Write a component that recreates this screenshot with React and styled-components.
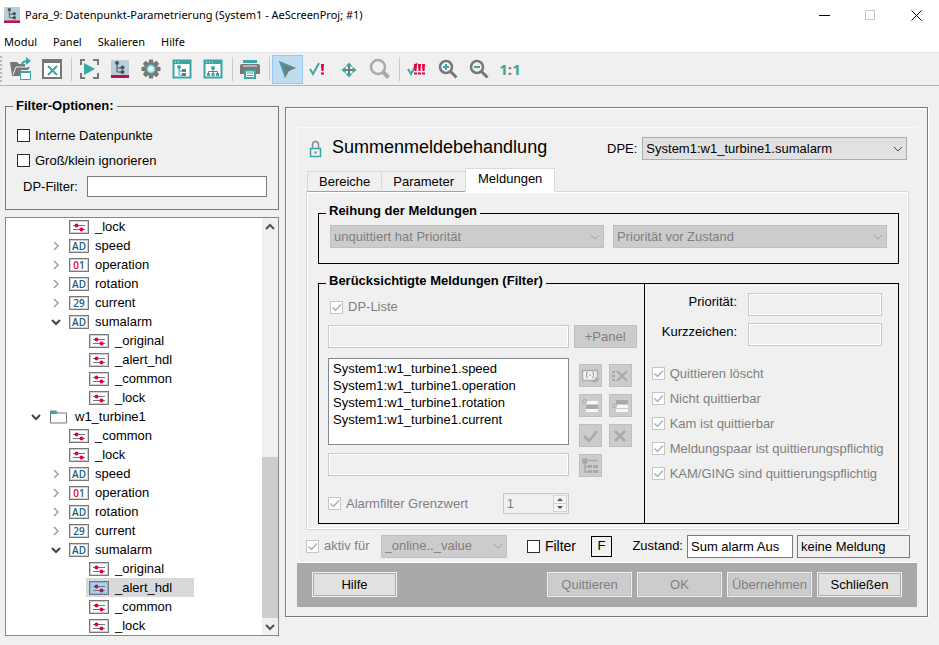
import React, { useState } from 'react'
import styled, { createGlobalStyle, css } from 'styled-components'

const teal = '#3aa6a6'
const grey = '#777777'
const red = '#e4003a'

const GlobalStyle = createGlobalStyle`
  * {
    box-sizing: border-box;
  }

  body {
    margin: 0;
    background: #f0f0f0;
    color: #000;
    font: 13px/16px "Liberation Sans", Arial, sans-serif;
  }

  button, input, select {
    margin: 0;
    font: inherit;
    color: inherit;
  }
`

const Window = styled.div`
  display: flex;
  flex-direction: column;
  min-height: 100vh;
`

/* title and menu */

const TitleBar = styled.header`
  display: flex;
  align-items: center;
  gap: 5px;
  height: 30px;
  padding-left: 4px;
  background: #fff;
`

const Title = styled.h1`
  flex: 1;
  margin: 0;
  font: 400 11px/16px "Noto Sans", "Open Sans", sans-serif;
  white-space: nowrap;
`

const WindowButtons = styled.div`
  display: flex;
`

const WindowButton = styled.button`
  display: flex;
  align-items: center;
  justify-content: center;
  width: 46px;
  height: 29px;
  padding: 0;
  border: 0;
  background: none;
  color: ${({ disabled }) => (disabled ? '#c4c4c4' : '#000')};
`

const MenuBar = styled.nav`
  display: flex;
  align-items: center;
  gap: 16px;
  height: 22px;
  padding: 2px 4px 0;
  background: #fff;
`

const MenuItem = styled.button`
  padding: 0;
  border: 0;
  background: none;
  font: 11px/16px "Noto Sans", "Open Sans", sans-serif;
`

/* toolbar */

const Toolbar = styled.div`
  display: flex;
  align-items: center;
  height: 34px;
  border-top: 1px solid #e4e4e4;
  border-bottom: 1px solid #b4b4b4;
  background: #f0f0f0;
`

const Grip = styled.div`
  width: 6px;
  height: 26px;
  border-left: 2px dotted #b8b8b8;
`

const ToolButton = styled.button`
  display: flex;
  align-items: center;
  justify-content: center;
  width: 31px;
  height: 29px;
  padding: 0 1px 0 0;
  border: 1px solid ${({ $active }) => ($active ? '#90c8f6' : 'transparent')};
  background: ${({ $active }) => ($active ? '#bfdcf3' : 'none')};
`

const ToolSeparator = styled.div`
  width: 6px;
  height: 24px;
  background: linear-gradient(#c9c9c9, #c9c9c9) center / 1px 100% no-repeat;
`

const ScaleText = styled.span`
  color: ${teal};
  font: 700 15px/20px "Open Sans", sans-serif;

  i {
    color: ${grey};
    font-style: normal;
  }
`

/* page */

const Main = styled.main`
  flex: 1;
  display: flex;
  align-items: stretch;
  gap: 6px;
  padding: 12px 11px 9px 5px;
`

const Sidebar = styled.aside`
  display: flex;
  flex-direction: column;
  gap: 7px;
  width: 274px;
  flex-shrink: 0;
`

const Group = styled.fieldset`
  min-width: 0;
  margin: 0;
  border: 1px solid ${({ $dark }) => ($dark ? '#000' : '#7a7a7a')};
  padding: ${({ $padding }) => $padding};
`

const Legend = styled.legend`
  margin-left: ${({ $indent = -4 }) => $indent}px;
  padding: 0 3px ${({ $raised }) => ($raised ? '5px' : '0')};
  font-weight: 700;
`

const Check = styled.label`
  display: flex;
  align-items: center;
  gap: 5px;
  height: ${({ $height }) => $height || 25}px;
  font-size: ${({ $large }) => ($large ? 14 : 13)}px;
  color: ${({ $disabled }) => ($disabled ? '#7f7f7f' : '#000')};
  white-space: nowrap;
`

const CheckMark = styled.span`
  display: grid;
  width: 13px;
  height: 13px;

  > * {
    grid-area: 1 / 1;
  }

  svg {
    pointer-events: none;
  }
`

const CheckInput = styled.input`
  appearance: none;
  width: 13px;
  height: 13px;
  border: 1px solid #2b2b2b;
  background: #fff;

  &:disabled {
    border-color: #c6c6c6;
  }
`

const FilterRow = styled.div`
  display: flex;
  align-items: center;
  gap: 9px;
  padding: 3px 0 0 6px;

  label {
    flex-shrink: 0;
  }
`

const TextInput = styled.input`
  flex-shrink: ${({ $width }) => ($width ? 0 : 1)};
  min-width: 0;
  width: ${({ $width }) => ($width ? `${$width}px` : '100%')};
  height: ${({ $height }) => $height || 23}px;
  padding: 0 3px;
  border: 1px solid #7a7a7a;
  background: ${({ $plain }) => ($plain ? '#f0f0f0' : '#fff')};

  &:disabled {
    border-color: #c8c8c8;
    background: #f0f0f0;
    box-shadow: inset 0 0 0 1px #fff;
  }
`

/* datapoint tree */

const TreeBox = styled.div`
  flex: 1;
  display: flex;
  border: 1px solid #828790;
  background: #fff;
`

const TreeList = styled.ul`
  flex: 1;
  margin: -1px 0 0;
  padding: 0;
  list-style: none;
`

const TreeRow = styled.li`
  display: flex;
  align-items: center;
  height: 19px;
  padding-left: ${({ $level }) => $level * 20}px;
`

const TreeArrow = styled.span`
  display: flex;
  justify-content: center;
  width: 20px;
`

const TreeItem = styled.span`
  display: flex;
  align-items: center;
  gap: 6px;
  height: 19px;
  padding: 0 22px 0 3px;
  background: ${({ $selected }) => ($selected ? '#d9d9d9' : 'none')};
`

const TypeBadge = styled.span`
  display: flex;
  align-items: center;
  justify-content: center;
  width: 20px;
  height: 14px;
  border: 1px solid #777;
  background: ${({ $selected }) => ($selected ? '#a9d0f5' : '#fff')};
  box-shadow: inset 0 0 0 1px ${({ $selected }) => ($selected ? '#8fb4d6' : '#d0d0d0')};
  color: #1b5f80;
  font: 600 10px/12px "Open Sans", sans-serif;

  b {
    color: ${red};
    font-weight: 600;
  }
`

const FolderCell = styled.span`
  display: flex;
  width: 20px;
`

const ScrollBar = styled.div`
  display: flex;
  flex-direction: column;
  width: 16px;
  background: #f0f0f0;
`

const ScrollButton = styled.button`
  display: flex;
  align-items: center;
  justify-content: center;
  height: 17px;
  padding: 0;
  border: 0;
  background: none;
`

const ScrollTrack = styled.div`
  flex: 1;
  display: flex;
  flex-direction: column;
  justify-content: flex-end;
`

const ScrollThumb = styled.div`
  height: 42%;
  background: #cdcdcd;
`

/* parameter panel */

const Panel = styled.section`
  flex: 1;
  align-self: flex-start;
  min-width: 0;
  margin-top: 9px;
  padding: 19px 10px 9px 11px;
  border: 1px solid #7a7a7a;
  box-shadow: 1px 1px #fff, inset 1px 1px #fff;
`

const PanelBody = styled.div`
  padding-top: 1px;
  box-shadow: inset 1px 1px #fafafa;
`

const PanelHead = styled.div`
  display: flex;
  align-items: center;
  gap: 10px;
  padding: 9px 10px 9px 12px;
`

const PanelTitle = styled.h2`
  flex: 1;
  margin: 0;
  padding-bottom: 3px;
  font-size: 18px;
  line-height: 20px;
  font-weight: 400;
`

const DpeField = styled.label`
  display: flex;
  align-items: center;
  gap: 5px;
  flex: 0 1 300px;
`

const SelectBox = styled.span`
  display: grid;
  align-items: center;
  flex: ${({ $width }) => ($width ? `0 0 ${$width}px` : '1')};
  min-width: 0;

  > * {
    grid-area: 1 / 1;
  }

  svg {
    justify-self: end;
    margin-right: 4px;
    pointer-events: none;
    color: ${({ $disabled }) => ($disabled ? '#a0a0a0' : '#444')};
  }
`

const SelectInput = styled.select`
  appearance: none;
  width: 100%;
  height: 23px;
  padding: 0 20px 0 3px;
  border: 1px solid #adadad;
  border-radius: 0;
  background: #e1e1e1;

  &:disabled {
    border-color: #bfbfbf;
    background: #cccccc;
    color: #7f7f7f;
    opacity: 1;
  }
`

const Tabs = styled.div`
  display: flex;
  align-items: flex-end;
  height: 22px;
  padding-left: 10px;
`

const Tab = styled.button`
  height: 21px;
  margin-bottom: -1px;
  padding: 0 11px;
  border: 1px solid #d9d9d9;
  border-right-width: 0;
  border-bottom-color: #a0a0a0;
  background: #f0f0f0;

  ${({ $selected }) =>
    $selected &&
    css`
      height: 24px;
      padding: 0 12px 2px;
      border-right-width: 1px;
      border-bottom-color: #fff;
      background: #fff;
    `}
`

const TabPane = styled.div`
  display: flex;
  flex-direction: column;
  gap: 9px;
  margin: 0 8px 0 9px;
  padding: 11px 9px 5px 11px;
  border: 1px solid #d9d9d9;
  box-shadow: inset 0 0 0 1px #fff;
`

const OrderRow = styled.div`
  display: flex;
  gap: 9px;
`

// pulled up to the border line so the divider meets it
const FilterColumns = styled.div`
  display: grid;
  grid-template-columns: minmax(0, 9fr) minmax(0, 7fr);
  margin-top: -10px;
`

const ListColumn = styled.div`
  padding: 14px 7px 9px 9px;
  border-right: 1px solid #000;
`

const OptionColumn = styled.div`
  display: flex;
  flex-direction: column;
  gap: 7px;
  padding: 9px 16px 0 7px;
`

const OptionChecks = styled.div`
  padding-top: 8px;
`

const OptionField = styled.label`
  display: flex;
  justify-content: flex-end;
  gap: 11px;
  line-height: 18px;
`

const ListHead = styled.div`
  padding: 0 2px 9px;
`

const ListGrid = styled.div`
  display: grid;
  grid-template-columns: 1fr 63px;
  gap: 10px 5px;
`

const ListStack = styled.div`
  display: flex;
  flex-direction: column;
  gap: 8px;
`

const DpList = styled.ul`
  height: 87px;
  margin: 0;
  padding: 1px 4px;
  border: 1px solid #828790;
  background: #fff;
  list-style: none;
  line-height: 17px;
`

const IconGrid = styled.div`
  display: grid;
  grid-template-columns: 23px 23px;
  grid-auto-rows: 23px;
  gap: 7px;
  padding: 6px 5px 0;
`

const FlatButton = styled.button`
  display: flex;
  align-items: center;
  justify-content: center;
  height: 23px;
  padding: 0;
  border: 1px solid #bfbfbf;
  background: #cccccc;
  color: #7f7f7f;
`

const LimitRow = styled.div`
  display: flex;
  align-items: center;
  justify-content: space-between;
  padding: 16px 68px 0 0;
`

const Spin = styled.span`
  display: flex;
  align-items: center;
  width: 66px;
  height: 21px;
  padding-right: 1px;
  border: 1px solid #c8c8c8;
`

const SpinInput = styled.input`
  flex: 1;
  min-width: 0;
  padding: 0 3px;
  border: 0;
  background: none;
  color: #7f7f7f;
`

const SpinArrows = styled.span`
  display: flex;
  width: 14px;
  height: 17px;
  border: 1px solid #d4d4d4;
  background: #f4f4f4;
`

const StateRow = styled.div`
  display: flex;
  align-items: center;
  justify-content: space-between;
  height: 32px;
  padding: 0 7px 0 9px;
`

const StateGroup = styled.div`
  display: flex;
  align-items: center;
  gap: ${({ $gap }) => $gap}px;
`

const FilterButton = styled.button`
  width: 21px;
  height: 21px;
  padding: 0;
  border: 1px solid #000;
  background: #f0f0f0;
`

const ButtonBar = styled.footer`
  display: flex;
  gap: 5px;
  padding: 9px 15px 10px;
  border-top: 1px solid #fff;
  background: #a9a9a9;
`

const BarButton = styled.button`
  width: 85px;
  height: 25px;
  margin-right: ${({ $first }) => ($first ? 'auto' : '0')};
  padding: 0;
  border: 1px solid #f0f0f0;
  background: #e1e1e1;
  box-shadow: inset 0 0 0 1px #adadad;

  &:disabled {
    background: #cccccc;
    box-shadow: inset 0 0 0 1px #bfbfbf;
    color: #7f7f7f;
  }
`

/* icons */

const Svg = ({ size = 24, children, ...rest }) => (
  <svg width={size} height={size} viewBox={`0 0 ${size} ${size}`} fill='none' aria-hidden='true' {...rest}>
    {children}
  </svg>
)

const Chevron = () => (
  <svg width='10' height='6' viewBox='0 0 10 6' fill='none' aria-hidden='true'>
    <path d='M1 1l4 4 4-4' stroke='currentColor' />
  </svg>
)

const ModuleIcon = ({ size = 16 }) => (
  <svg width={size} height={size} viewBox='0 0 18 18' aria-hidden='true'>
    <path fill='#b9ced9' d='M0 0h18v15H0z' />
    <path fill='#b01657' d='M0 15h18v3H0z' />
    <circle cx='6' cy='3' r='2' fill='#4b545c' />
    <path d='M6 5v7h5M6 8h5' stroke='#4b545c' fill='none' />
    <circle cx='11.5' cy='7.5' r='2' fill='#4b545c' />
    <circle cx='11.5' cy='12' r='2' fill='#4b545c' />
  </svg>
)

const OpenIcon = () => (
  <Svg>
    <path d='M1 5h7l2 2h6v3h5l-2 3h-7v6H3z' fill={grey} />
    <path d='M4 18l3-8h12' stroke='#f0f0f0' />
    <path d='M13 8c0-3 2-4 6-4' stroke={teal} strokeWidth='2' />
    <path d='M17 0l5 4-5 4z' fill={teal} />
    <path d='M11.500 14.500h10v8h-10z' fill='#fff' stroke={teal} />
    <path d='M11 14h11v2H11z' fill={teal} />
  </Svg>
)

const CloseBoxIcon = () => (
  <Svg>
    <path d='M3 3h18v18H3z' fill='#fff' stroke={grey} strokeWidth='2' />
    <path d='M2 2h20v4H2z' fill={grey} />
    <path d='M8 9l9 9M17 9l-9 9' stroke={teal} strokeWidth='2' />
  </Svg>
)

const PlayIcon = () => (
  <Svg>
    <path d='M8 3H4v5M16 3h5v5M4 16v5h4M21 16v5h-5' stroke={grey} strokeWidth='2' />
    <path d='M7 6l11 6-11 6z' fill={teal} />
  </Svg>
)

const GearIcon = () => (
  <Svg>
    {[0, 45, 90, 135].map((angle) => (
      <path key={angle} d='M10 2.500h4l.5 4v11l-.5 4h-4l-.5-4v-11z' fill={grey} transform={`rotate(${angle} 12 12)`} />
    ))}
    <circle cx='12' cy='12' r='6.500' fill={grey} />
    <circle cx='12' cy='12' r='3.500' fill='#f0f0f0' stroke='#a5dada' strokeWidth='2' />
    <circle cx='12' cy='12' r='4.500' stroke={teal} />
  </Svg>
)

const TreeWindowIcon = () => (
  <Svg>
    <path d='M3.500 3.500h17v17h-17z' fill='#fff' stroke={teal} strokeWidth='2' />
    <path d='M3 3h18v4H3z' fill={teal} />
    <path d='M5 5h1M8 5h1' stroke='#fff' />
    <circle cx='9' cy='10' r='2' fill={teal} />
    <path d='M9 11v7h5M9 14h5' stroke={teal} />
    <path d='M12 12h4v3h-4zM12 16h4v3h-4z' fill={grey} />
  </Svg>
)

const ChartWindowIcon = () => (
  <Svg>
    <path d='M3.500 3.500h17v17h-17z' fill='#fff' stroke={teal} strokeWidth='2' />
    <path d='M3 3h18v4H3z' fill={teal} />
    <path d='M5 5h1M8 5h1M11 5h1' stroke='#fff' />
    <circle cx='12' cy='11' r='2' fill={teal} />
    <path d='M12 12v5M7.500 17v-2.500h9V17' stroke={grey} />
    <path d='M6 16h3v3H6zM10.500 16h3v3h-3zM15 16h3v3h-3z' fill={teal} />
  </Svg>
)

const PrintIcon = () => (
  <Svg>
    <path d='M5 3h14v3H5z' fill={teal} />
    <path d='M4 7h16q2 0 2 2v8h-4v-3H6v3H2V9q0-2 2-2z' fill={grey} />
    <path d='M5 9h14' stroke='#f0f0f0' />
    <path d='M7 13.500h10v7.500H7z' fill='#fff' stroke={teal} strokeWidth='2' />
    <path d='M9 16h6M9 18.500h6' stroke={teal} />
  </Svg>
)

const PointerIcon = () => (
  <Svg>
    <path d='M4 4l17 7-7 3-4 7z' fill={grey} />
    <path d='M4 4l6 17 1-3L7 7z' fill={teal} />
    <path d='M4 4l17 7-3 .5L7 7z' fill={teal} />
  </Svg>
)

const AckIcon = () => (
  <Svg>
    <path d='M4 12l3 5 6-11' stroke={teal} strokeWidth='2' />
    <path d='M15 7h3l-.5 7h-2zM15 15.500h3v2h-3z' fill={red} />
  </Svg>
)

const AckAllIcon = () => (
  <Svg>
    <path d='M3 12l3 5 6-11' stroke={teal} strokeWidth='2' />
    {[9, 13, 17].map((x) => (
      <path key={x} d='M0 0h3l-.5 7h-2zM0 8.500h3v2H0z' fill={red} transform={`translate(${x} 7)`} />
    ))}
  </Svg>
)

const MoveIcon = () => (
  <Svg>
    <path d='M12 8v10M7 13h10' stroke={grey} strokeWidth='2' />
    <path d='M12 5.500l3.500 4h-7zM12 20.500l3.500-4h-7zM4.500 13l4-3.500v7zM19.500 13l-4-3.500v7z' fill={teal} />
    <path d='M12 9v8M8 13h8' stroke={grey} strokeWidth='2' />
  </Svg>
)

const LensIcon = ({ color = grey, radius = 6, sign }) => (
  <Svg>
    <circle cx='10' cy='10' r={radius} stroke={color} strokeWidth='2.500' />
    <path d='M14.500 14.500l6 6' stroke={color} strokeWidth={radius > 6 ? 4 : 3} />
    {sign && <path d={sign} stroke={teal} strokeWidth='2' />}
  </Svg>
)

const LockIcon = () => (
  <svg width='13' height='18' viewBox='0 0 13 18' fill='none' aria-hidden='true'>
    <path d='M3.500 8V4.500a3 3 0 0 1 6 0V8' stroke='#8a8a8a' strokeWidth='1.500' />
    <path d='M1.500 8.500h10v8h-10z' stroke={teal} strokeWidth='1.500' />
    <path d='M5.500 11.500h2v2h-2z' fill={grey} />
  </svg>
)

const SliderBadge = ({ selected }) => (
  <TypeBadge $selected={selected}>
    <svg width='14' height='10' viewBox='0 0 14 10' aria-hidden='true'>
      <path d='M1 3.500h12M1 7.500h12' stroke='#777' />
      <circle cx='4.500' cy='3.500' r='2' fill={selected ? '#b01657' : red} />
      <circle cx='9.500' cy='7.500' r='2' fill={selected ? '#b01657' : red} />
    </svg>
  </TypeBadge>
)

const FolderIcon = () => (
  <FolderCell>
    <svg width='19' height='14' viewBox='0 0 19 14' aria-hidden='true'>
      <path d='M1.500 1v12h16V3H9L7.500 1z' fill='#fff' stroke={grey} />
      <path d='M1 1h6l1.500 3H1z' fill={teal} />
    </svg>
  </FolderCell>
)

const listIcons = {
  edit: (
    <>
      <path d='M1.500 3.500h15v10h-15z' fill='#f2f2f2' stroke='#adadad' strokeWidth='1.500' />
      <path d='M7 5q-2 0-1.500 3Q5 11 7 11M11 5q2 0 1.500 3 .5 3-1.500 3M8 8h2' stroke='#999' />
      <path d='M11 15l4-5 3 2-4 4z' fill='#adadad' />
    </>
  ),
  remove: (
    <>
      <path d='M1 4h3v2H1zM1 8h3v2H1zM1 12h3v2H1z' fill='#a8a8a8' />
      <path d='M6 4l10 10M16 4L6 14' stroke='#a8a8a8' strokeWidth='2' />
    </>
  ),
  before: (
    <>
      <path d='M5 4h12v3H5zM5 12h12v3H5z' fill='#f7f7f7' />
      <path d='M5 8h12v4H5z' fill='#a8a8a8' />
      <circle cx='3.500' cy='4.500' r='2' stroke='#a8a8a8' />
    </>
  ),
  after: (
    <>
      <path d='M5 8h12v3H5zM5 12h12v3H5z' fill='#f7f7f7' />
      <path d='M5 3h12v4H5z' fill='#a8a8a8' />
      <circle cx='3.500' cy='9' r='2' stroke='#a8a8a8' />
    </>
  ),
  accept: <path d='M3 9l5 5 8-10' stroke='#a8a8a8' strokeWidth='2.500' />,
  discard: <path d='M4 4l10 10M14 4L4 14' stroke='#a8a8a8' strokeWidth='2.500' />,
  tree: (
    <>
      <circle cx='4' cy='4' r='3' fill='#a8a8a8' />
      <path d='M4 5v10h4M4 9.500h4M8 3.500h9' stroke='#a8a8a8' strokeWidth='1.500' />
      <path d='M7 8h4v3H7zM12 8h5v3h-5zM7 13h4v3H7zM12 13h5v3h-5z' fill='#a8a8a8' />
    </>
  ),
}

/* data */

const toolGroups = [
  [
    ['Öffnen', <OpenIcon />],
    ['Fenster schließen', <CloseBoxIcon />],
  ],
  [
    ['Start', <PlayIcon />],
    ['Modul', <ModuleIcon size={18} />],
    ['Einstellungen', <GearIcon />],
    ['Baumansicht', <TreeWindowIcon />],
    ['Struktur', <ChartWindowIcon />],
  ],
  [['Drucken', <PrintIcon />]],
  [
    ['Auswahl', <PointerIcon />],
    ['Quittieren', <AckIcon />],
    ['Verschieben', <MoveIcon />],
    ['Lupe', <LensIcon color='#aaaaaa' radius={7} />],
  ],
  [
    ['Alle quittieren', <AckAllIcon />],
    ['Vergrößern', <LensIcon sign='M7 10h6M10 7v6' />],
    ['Verkleinern', <LensIcon sign='M7 10h6' />],
    ['Originalgröße', <ScaleText>1<i>:</i>1</ScaleText>],
  ],
]

const elements = [
  { level: 2, type: 'AD', name: 'speed', arrow: 'closed' },
  { level: 2, type: '01', name: 'operation', arrow: 'closed' },
  { level: 2, type: 'AD', name: 'rotation', arrow: 'closed' },
  { level: 2, type: '29', name: 'current', arrow: 'closed' },
  { level: 2, type: 'AD', name: 'sumalarm', arrow: 'open' },
  { level: 3, type: 'config', name: '_original' },
  { level: 3, type: 'config', name: '_alert_hdl' },
  { level: 3, type: 'config', name: '_common' },
  { level: 3, type: 'config', name: '_lock' },
]

const tree = [
  { level: 2, type: 'config', name: '_lock' },
  ...elements,
  { level: 1, type: 'folder', name: 'w1_turbine1', arrow: 'open' },
  { level: 2, type: 'config', name: '_common' },
  { level: 2, type: 'config', name: '_lock' },
  ...elements,
]

const dpList = ['speed', 'operation', 'rotation', 'current']

const options = [
  'Quittieren löscht',
  'Nicht quittierbar',
  'Kam ist quittierbar',
  'Meldungspaar ist quittierungspflichtig',
  'KAM/GING sind quittierungspflichtig',
]

const listButtons = [
  ['Bearbeiten', 'edit'],
  ['Entfernen', 'remove'],
  ['Davor einfügen', 'before'],
  ['Danach einfügen', 'after'],
  ['Annehmen', 'accept'],
  ['Verwerfen', 'discard'],
  ['Datenpunkt wählen', 'tree'],
]

/* parts */

const Checkbox = ({ label, disabled, defaultChecked, large, height }) => (
  <Check $disabled={disabled} $large={large} $height={height}>
    <CheckMark>
      <CheckInput type='checkbox' disabled={disabled} defaultChecked={defaultChecked} />
      {defaultChecked && (
        <Svg size={13}>
          <path d='M2.500 6.500l3 3 5.500-6' stroke='#b0b0b0' strokeWidth='1.500' />
        </Svg>
      )}
    </CheckMark>
    {label}
  </Check>
)

const Select = ({ value, label, disabled, width }) => (
  <SelectBox $width={width} $disabled={disabled}>
    <SelectInput disabled={disabled} aria-label={label}>
      <option>{value}</option>
    </SelectInput>
    <Chevron />
  </SelectBox>
)

const TypeIcon = ({ type, selected }) => {
  if (type === 'folder') return <FolderIcon />
  if (type === 'config') return <SliderBadge selected={selected} />
  if (type === '01') return <TypeBadge><b>0</b>1</TypeBadge>
  return <TypeBadge>{type}</TypeBadge>
}

const Tree = () => {
  const [selected, setSelected] = useState(tree.length - 3)

  return (
    <TreeBox>
      <TreeList role='tree' aria-label='Datenpunkte'>
        {tree.map((node, idx) => (
          <TreeRow key={idx} role='treeitem' aria-selected={idx === selected} $level={node.level} onClick={() => setSelected(idx)}>
            <TreeArrow>
              {node.arrow && (
                <Svg size={12}>
                  {node.arrow === 'open'
                    ? <path d='M2 4l4 4 4-4' stroke='#444' strokeWidth='2' />
                    : <path d='M4 2l4 4-4 4' stroke='#a0a0a0' strokeWidth='1.500' />}
                </Svg>
              )}
            </TreeArrow>
            <TreeItem $selected={idx === selected}>
              <TypeIcon type={node.type} selected={idx === selected} />
              {node.name}
            </TreeItem>
          </TreeRow>
        ))}
      </TreeList>
      <ScrollBar>
        <ScrollButton aria-label='Nach oben'>
          <Svg size={10}><path d='M1 7l4-4 4 4' stroke='#505050' strokeWidth='2' /></Svg>
        </ScrollButton>
        <ScrollTrack><ScrollThumb /></ScrollTrack>
        <ScrollButton aria-label='Nach unten'>
          <Svg size={10}><path d='M1 3l4 4 4-4' stroke='#505050' strokeWidth='2' /></Svg>
        </ScrollButton>
      </ScrollBar>
    </TreeBox>
  )
}

const MessageFilter = () => (
  <Group $dark $padding='0'>
    <Legend $raised $indent={7}>Berücksichtigte Meldungen (Filter)</Legend>
    <FilterColumns>
      <ListColumn>
        <ListHead>
          <Checkbox label='DP-Liste' disabled defaultChecked height={18} />
        </ListHead>
        <ListGrid>
          <TextInput disabled aria-label='Datenpunkt' />
          <FlatButton disabled>+Panel</FlatButton>
          <ListStack>
            <DpList>
              {dpList.map((name) => <li key={name}>System1:w1_turbine1.{name}</li>)}
            </DpList>
            <TextInput disabled aria-label='Neuer Eintrag' />
          </ListStack>
          <IconGrid>
            {listButtons.map(([label, icon]) => (
              <FlatButton key={icon} disabled aria-label={label}>
                <Svg size={18}>{listIcons[icon]}</Svg>
              </FlatButton>
            ))}
          </IconGrid>
        </ListGrid>
        <LimitRow>
          <Checkbox label='Alarmfilter Grenzwert' disabled defaultChecked height={21} />
          <Spin>
            <SpinInput disabled defaultValue='1' aria-label='Grenzwert' />
            <SpinArrows>
              <svg width='12' height='15' viewBox='0 0 12 15' aria-hidden='true'>
                <path d='M6 2l3 3H3zM6 13l3-3H3z' fill='#555' />
                <path d='M0 7h12v1H0z' fill='#d4d4d4' />
              </svg>
            </SpinArrows>
          </Spin>
        </LimitRow>
      </ListColumn>
      <OptionColumn>
        <OptionField>Priorität:<TextInput $width={134} disabled /></OptionField>
        <OptionField>Kurzzeichen:<TextInput $width={134} disabled /></OptionField>
        <OptionChecks>
          {options.map((label) => <Checkbox key={label} label={label} disabled defaultChecked />)}
        </OptionChecks>
      </OptionColumn>
    </FilterColumns>
  </Group>
)

export default function App() {
  const [tool, setTool] = useState('Auswahl')

  return (
    <Window>
      <GlobalStyle />
      <TitleBar>
        <ModuleIcon />
        <Title>Para_9: Datenpunkt-Parametrierung (System1 - AeScreenProj; #1)</Title>
        <WindowButtons>
          <WindowButton aria-label='Minimieren'><Svg size={11}><path d='M0 5.500h11' stroke='currentColor' /></Svg></WindowButton>
          <WindowButton aria-label='Maximieren' disabled><Svg size={11}><path d='M.5.500h9v9H.5z' stroke='currentColor' /></Svg></WindowButton>
          <WindowButton aria-label='Schließen'><Svg size={11}><path d='M.5.500l10 10M10.500.500l-10 10' stroke='currentColor' /></Svg></WindowButton>
        </WindowButtons>
      </TitleBar>
      <MenuBar>
        {['Modul', 'Panel', 'Skalieren', 'Hilfe'].map((item) => <MenuItem key={item}>{item}</MenuItem>)}
      </MenuBar>
      <Toolbar>
        <Grip />
        {toolGroups.map((group, idx) => (
          <React.Fragment key={idx}>
            {idx > 0 && <ToolSeparator />}
            {group.map(([label, icon]) => (
              <ToolButton key={label} aria-label={label} $active={tool === label} onClick={() => setTool(label)}>
                {icon}
              </ToolButton>
            ))}
          </React.Fragment>
        ))}
      </Toolbar>
      <Main>
        <Sidebar>
          <Group $padding='9px 11px 12px'>
            <Legend>Filter-Optionen:</Legend>
            <Checkbox label='Interne Datenpunkte' />
            <Checkbox label='Groß/klein ignorieren' />
            <FilterRow>
              <label htmlFor='dp-filter'>DP-Filter:</label>
              <TextInput id='dp-filter' $height={21} />
            </FilterRow>
          </Group>
          <Tree />
        </Sidebar>
        <Panel>
          <PanelBody>
            <PanelHead>
              <LockIcon />
              <PanelTitle>Summenmeldebehandlung</PanelTitle>
              <DpeField>DPE:<Select value='System1:w1_turbine1.sumalarm' /></DpeField>
            </PanelHead>
            <Tabs role='tablist'>
              <Tab role='tab'>Bereiche</Tab>
              <Tab role='tab'>Parameter</Tab>
              <Tab role='tab' aria-selected='true' $selected>Meldungen</Tab>
            </Tabs>
            <TabPane>
              <Group $dark $padding='1px 11px 15px'>
                <Legend $raised>Reihung der Meldungen</Legend>
                <OrderRow>
                  <Select value='unquittiert hat Priorität' label='Reihung' disabled />
                  <Select value='Priorität vor Zustand' label='Zweite Reihung' disabled />
                </OrderRow>
              </Group>
              <MessageFilter />
            </TabPane>
            <StateRow>
              <StateGroup $gap={11}>
                <Checkbox label='aktiv für' disabled defaultChecked />
                <Select value='_online.._value' label='aktiv für' width={126} disabled />
              </StateGroup>
              <StateGroup $gap={15}>
                <Checkbox label='Filter' large />
                <FilterButton>F</FilterButton>
              </StateGroup>
              <StateGroup $gap={4}>
                <label htmlFor='state'>Zustand:</label>
                <TextInput id='state' $width={106} readOnly value='Sum alarm Aus' />
                <TextInput $width={113} $plain readOnly value='keine Meldung' aria-label='Meldung' />
              </StateGroup>
            </StateRow>
            <ButtonBar>
              <BarButton $first>Hilfe</BarButton>
              <BarButton disabled>Quittieren</BarButton>
              <BarButton disabled>OK</BarButton>
              <BarButton disabled>Übernehmen</BarButton>
              <BarButton>Schließen</BarButton>
            </ButtonBar>
          </PanelBody>
        </Panel>
      </Main>
    </Window>
  )
}
